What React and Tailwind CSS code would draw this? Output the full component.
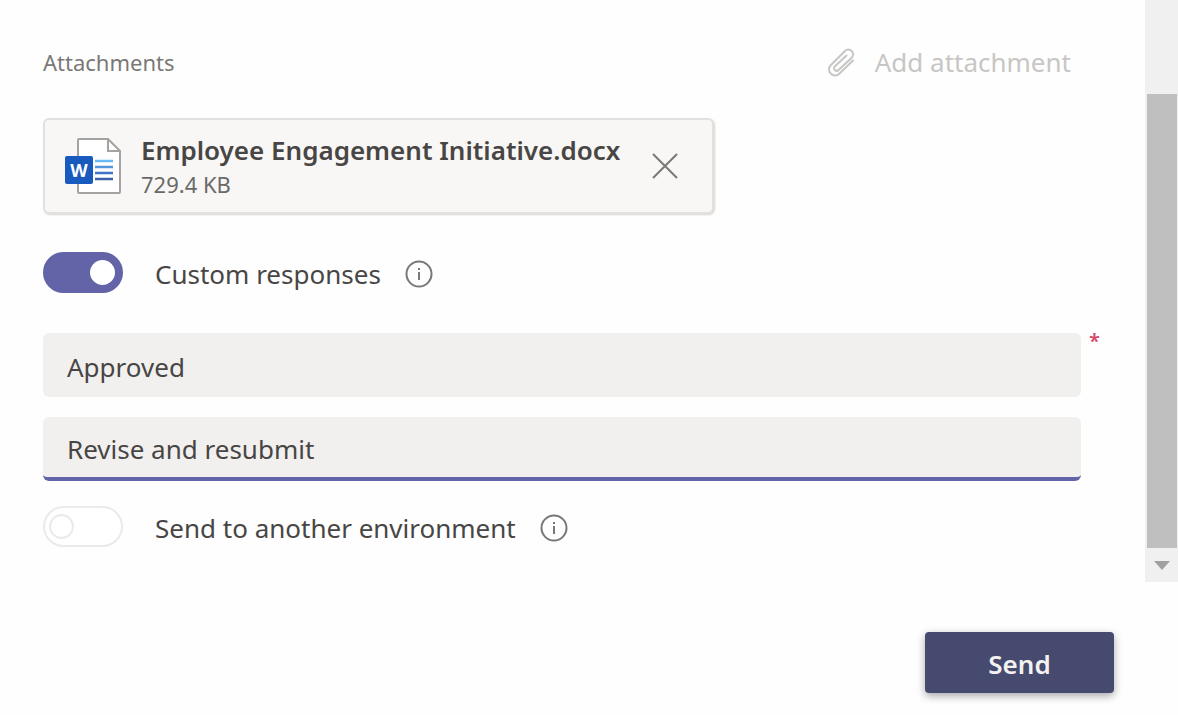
import React, { useState } from 'react';

const PaperclipIcon = () => (
  <svg width="28" height="30" viewBox="0 0 28 30" fill="none" stroke="currentColor" strokeWidth="2" strokeLinecap="round" strokeLinejoin="round" aria-hidden="true">
    <path d="M26 13.500 12.500 26.500a5.800 5.800 0 0 1-8.800 0 5.800 5.800 0 0 1 0-8.200L18 4a4.700 4.700 0 0 1 6.700 0 4.700 4.700 0 0 1 0 6.700L11.500 23a2.400 2.400 0 0 1-3.800-3.400L19.500 8.500" />
  </svg>
);

const InfoIcon = () => (
  <svg width="28" height="28" viewBox="0 0 28 28" fill="none" stroke="#7a7876" aria-hidden="true">
    <circle cx="14" cy="14" r="12.5" strokeWidth="2" />
    <path d="M14 12v8" strokeWidth="2" />
    <path d="M14 8v2" strokeWidth="2" />
  </svg>
);

const CloseIcon = () => (
  <svg width="26" height="26" viewBox="0 0 26 26" fill="none" stroke="#7a7876" strokeWidth="2" aria-hidden="true">
    <path d="M1 1 25 25M25 1 1 25" />
  </svg>
);

const WordIcon = () => (
  <svg width="56" height="58" viewBox="0 0 56 58" fill="none" aria-hidden="true">
    <path d="M14 2h29l12 12v41a1 1 0 0 1-1 1H14a1 1 0 0 1-1-1V3a1 1 0 0 1 1-1z" fill="#fff" stroke="#a5a3a1" strokeWidth="2" />
    <path d="M43 2v12h12" stroke="#a5a3a1" strokeWidth="2" />
    <path d="M30 24h18" stroke="#69b9f3" strokeWidth="2.500" />
    <path d="M30 30h18" stroke="#5495dc" strokeWidth="2.500" />
    <path d="M30 36h18" stroke="#3f76c9" strokeWidth="2.500" />
    <path d="M30 42h18" stroke="#3c62ae" strokeWidth="2.500" />
    <rect x="0" y="19" width="28" height="28" rx="2" fill="#185abd" />
    <text x="14" y="40" textAnchor="middle" fill="#fff" fontFamily="Noto Sans, sans-serif" fontWeight="700" fontSize="18">W</text>
  </svg>
);

function Toggle({ id, label, checked, onChange }) {
  return (
    <div className="flex h-12 items-center">
      <input
        id={id}
        type="checkbox"
        role="switch"
        checked={checked}
        onChange={(e) => onChange(e.target.checked)}
        className="flex h-[41px] w-20 shrink-0 appearance-none items-center rounded-full border-2 border-[#ebeae9] bg-white pr-1.5 pl-1 before:size-[25px] before:rounded-full before:border-2 before:border-[#ebeae9] before:bg-white checked:justify-end checked:border-[#6264a7] checked:bg-[#6264a7] checked:before:border-white"
      />
      <div className="ml-8 flex items-center gap-6 pt-1">
        <label htmlFor={id} className="text-[26px] leading-9">{label}</label>
        <button type="button" aria-label={`About ${label}`}>
          <InfoIcon />
        </button>
      </div>
    </div>
  );
}

function App() {
  const [custom, setCustom] = useState(true);
  const [otherEnv, setOtherEnv] = useState(false);
  const [responses, setResponses] = useState(['Approved', 'Revise and resubmit']);
  const [hasFile, setHasFile] = useState(true);

  const updateResponse = (index, value) => {
    setResponses(responses.map((r, i) => (i === index ? value : r)));
  };

  return (
    <form onSubmit={(e) => e.preventDefault()} className="min-h-screen bg-[#fefefe] font-['Noto_Sans',sans-serif] text-[#484644]">
      <div className="flex">
        <div className="min-w-0 flex-1 pt-[38px] pr-16 pb-8 pl-[43px]">
          <div className="flex h-12 items-center justify-between">
            <h2 className="text-[22px] text-[#7a7876]">Attachments</h2>
            <button type="button" className="mr-2.5 flex items-center gap-5 text-[26px] text-[#c8c6c4]">
              <PaperclipIcon />
              Add attachment
            </button>
          </div>

          {hasFile && (
            <div className="mt-8 flex h-24 w-fit items-center rounded-md border-2 border-[#e3e1df] bg-[#f8f7f6] px-5 shadow-[1px_1px_2px_#d8d6d4]">
              <WordIcon />
              <div className="ml-5">
                <p className="text-[26px] leading-9 font-semibold">Employee Engagement Initiative.docx</p>
                <p className="text-[22px] leading-8 text-[#6b6967]">729.4 KB</p>
              </div>
              <button type="button" aria-label="Remove attachment" onClick={() => setHasFile(false)} className="mr-3.5 ml-8">
                <CloseIcon />
              </button>
            </div>
          )}

          <div className="mt-[34px]">
            <Toggle id="custom" label="Custom responses" checked={custom} onChange={setCustom} />
          </div>

          <div className="relative mt-[37px] flex flex-col gap-5">
            {responses.map((response, i) => (
              <input
                key={i}
                type="text"
                aria-label={`Response ${i + 1}`}
                value={response}
                onChange={(e) => updateResponse(i, e.target.value)}
                className={`h-16 w-full rounded-md bg-[#f1f0ee] px-6 pt-1 text-[26px] outline-none ${i === 1 ? 'border-b-4 border-[#6264a7]' : ''}`}
              />
            ))}
            <span className="absolute top-0 left-full ml-2 text-xl leading-4 font-semibold text-[#d5486a]">*</span>
          </div>

          <div className="mt-[21px]">
            <Toggle id="environment" label="Send to another environment" checked={otherEnv} onChange={setOtherEnv} />
          </div>
        </div>

        <div className="flex w-[33px] shrink-0 flex-col bg-[#f0f0f0] pt-[94px]" aria-hidden="true">
          <div className="mr-px ml-0.5 flex-1 bg-[#bfbfbf]" />
          <div className="flex h-[34px] items-center justify-center">
            <svg width="16" height="9" viewBox="0 0 16 9">
              <path d="M0 0h16L8 9z" fill="#a0a0a0" />
            </svg>
          </div>
        </div>
      </div>

      <div className="flex justify-end pt-[50px] pr-16">
        <button type="submit" className="h-[61px] w-[189px] rounded-sm bg-[#464a6e] pt-1 text-[26px] font-semibold text-[#f3f2f1] shadow-[0_3px_8px_#00000059]">
          Send
        </button>
      </div>
    </form>
  );
}

export default App;
